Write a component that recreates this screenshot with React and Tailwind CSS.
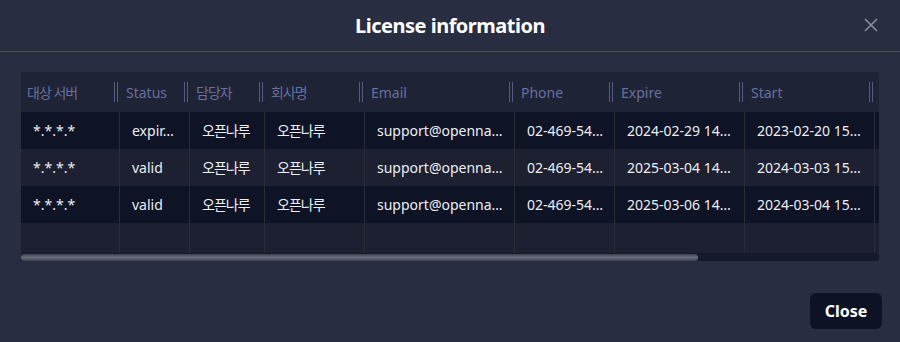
import React from 'react';

const cols = [
  { key: 'server', label: '대상 서버', w: 'w-[99px]', ko: true },
  { key: 'status', label: 'Status', w: 'w-[70px]' },
  { key: 'manager', label: '담당자', w: 'w-[75px]', ko: true },
  { key: 'company', label: '회사명', w: 'w-[100px]', ko: true },
  { key: 'email', label: 'Email', w: 'w-[150px]' },
  { key: 'phone', label: 'Phone', w: 'w-[100px]' },
  { key: 'expire', label: 'Expire', w: 'w-[130px]' },
  { key: 'start', label: 'Start', w: 'w-[130px]' },
  // scrolled out of view, only its edge shows
  { key: 'extra', label: '', w: 'w-[230px]' },
];

// cell text as the grid shows it (already cut to fit the column)
const rows = [
  { server: '*.*.*.*', status: 'expir…', manager: '오픈나루', company: '오픈나루', email: 'support@openna…', phone: '02-469-54…', expire: '2024-02-29 14…', start: '2023-02-20 15…', extra: '' },
  { server: '*.*.*.*', status: 'valid', manager: '오픈나루', company: '오픈나루', email: 'support@openna…', phone: '02-469-54…', expire: '2025-03-04 14…', start: '2024-03-03 15…', extra: '' },
  { server: '*.*.*.*', status: 'valid', manager: '오픈나루', company: '오픈나루', email: 'support@openna…', phone: '02-469-54…', expire: '2025-03-06 14…', start: '2024-03-04 15…', extra: '' },
];

const koCols = ['manager', 'company'];

const App = () => {
  return (
    <div
      className="w-[900px] h-[342px] bg-[#282d42] flex flex-col text-white"
      style={{ fontFamily: '"Noto Sans", "Noto Sans CJK KR", sans-serif' }}
    >
      {/* title bar */}
      <div className="relative h-[52px] flex items-center justify-center border-b border-[#4b4f47] shrink-0">
        <h1 className="text-[20px] font-bold tracking-tight text-white">License information</h1>
        <button className="absolute right-[22px] top-[18px] text-[#8d919b]">
          <svg width="14" height="14" viewBox="0 0 14 14" fill="none" stroke="currentColor" strokeWidth="1.5">
            <path d="M1 1 L13 13 M13 1 L1 13" />
          </svg>
        </button>
      </div>

      {/* table */}
      <div className="mx-[21px] mt-[20px] w-[858px] flex flex-col">
        <div className="h-[181px] overflow-hidden bg-[#1c2030]">
          <div className="w-max flex flex-col h-full">
            <div className="flex h-[40px] bg-[#1f2336] shrink-0">
              {cols.map((c) => (
                <div
                  key={c.key}
                  className={`${c.w} relative flex items-center pl-[6px] shrink-0 text-[14px] text-[#66709f] ${c.ko ? 'tracking-[-1px]' : ''}`}
                >
                  {c.label}
                  <div className="absolute right-[2px] top-[10px] h-[20px] flex gap-[2px]">
                    <div className="w-px h-full bg-[#545c85]" />
                    <div className="w-px h-full bg-[#545c85]" />
                  </div>
                </div>
              ))}
            </div>
            {rows.map((r, i) => (
              <div key={i} className={`flex h-[37px] shrink-0 ${i % 2 === 0 ? 'bg-[#0e1326]' : 'bg-[#1c2030]'}`}>
                {cols.map((c) => (
                  <div
                    key={c.key}
                    className={`${c.w} shrink-0 flex items-center pl-[12px] border-r border-[#2a2d36] text-[14px] text-[#eceef3] whitespace-nowrap overflow-hidden ${koCols.includes(c.key) ? 'tracking-[-1px]' : ''}`}
                  >
                    {r[c.key]}
                  </div>
                ))}
              </div>
            ))}
            <div className="flex flex-1">
              {cols.map((c) => (
                <div key={c.key} className={`${c.w} shrink-0 border-r border-[#2a2d36]`} />
              ))}
            </div>
          </div>
        </div>
        {/* scrollbar */}
        <div className="h-[8px] bg-[#151a2a] rounded-r-[3px] flex items-center">
          <div className="w-[677px] h-[7px] rounded-full bg-gradient-to-b from-[#3d4150] via-[#6a6e7b] to-[#3d4150]" />
        </div>
      </div>

      <div className="flex justify-end pr-[18px] mt-[32px]">
        <button className="w-[72px] h-[36px] rounded-[6px] bg-[#0d1224] text-white font-bold text-[16px]">
          Close
        </button>
      </div>
    </div>
  );
};

export default App;
